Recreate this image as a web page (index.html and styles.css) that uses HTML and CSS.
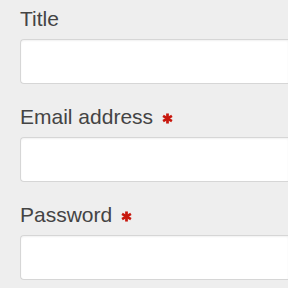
FILE: index.html
```html
<!DOCTYPE html>
<html lang="en">

<head>
    <meta charset="UTF-8">
    <meta name="viewport" content="width=device-width, initial-scale=1.0">
    <title>Sign up</title>
    <link rel="stylesheet" href="styles.css">
</head>

<body>
    <form class="form">
        <div class="field">
            <label class="label" for="title">Title</label>
            <input class="input" id="title" type="text">
        </div>
        <div class="field">
            <label class="label" for="email">Email address
                <svg class="req" viewBox="0 0 12 12" aria-hidden="true">
                    <g stroke="#c8170d" stroke-width="3">
                        <line x1="6" y1="0.5" x2="6" y2="11.5" />
                        <line x1="1.2" y1="3.2" x2="10.8" y2="8.8" />
                        <line x1="1.2" y1="8.8" x2="10.8" y2="3.2" />
                    </g>
                </svg>
            </label>
            <input class="input" id="email" type="email">
        </div>
        <div class="field">
            <label class="label" for="password">Password
                <svg class="req" viewBox="0 0 12 12" aria-hidden="true">
                    <g stroke="#c8170d" stroke-width="3">
                        <line x1="6" y1="0.5" x2="6" y2="11.5" />
                        <line x1="1.2" y1="3.2" x2="10.8" y2="8.8" />
                        <line x1="1.2" y1="8.8" x2="10.8" y2="3.2" />
                    </g>
                </svg>
            </label>
            <input class="input" id="password" type="password">
        </div>
    </form>
</body>

</html>
```

FILE: styles.css
```css
html,
body {
    margin: 0;
    background-color: #eeeeee;
}

.form {
    padding: 6px 0 0 20px;
    font-family: "Liberation Sans", Arial, sans-serif;
}

.field {
    margin-bottom: 20px;
}

.label {
    display: block;
    font-size: 21px;
    line-height: 25px;
    color: #444444;
    margin-bottom: 8px;
}

.req {
    width: 11px;
    height: 11px;
    margin-left: 3px;
    vertical-align: 0;
}

/* the field runs on past the right edge of the view */
.input {
    display: block;
    box-sizing: border-box;
    width: 100%;
    height: 45px;
    margin: 0;
    border: 1px solid #d6d6d6;
    border-right: 0;
    border-radius: 4px 0 0 4px;
    background-color: #ffffff;
    box-shadow: inset 0 1px 2px rgba(0, 0, 0, 0.06);
    outline: none;
}
```
